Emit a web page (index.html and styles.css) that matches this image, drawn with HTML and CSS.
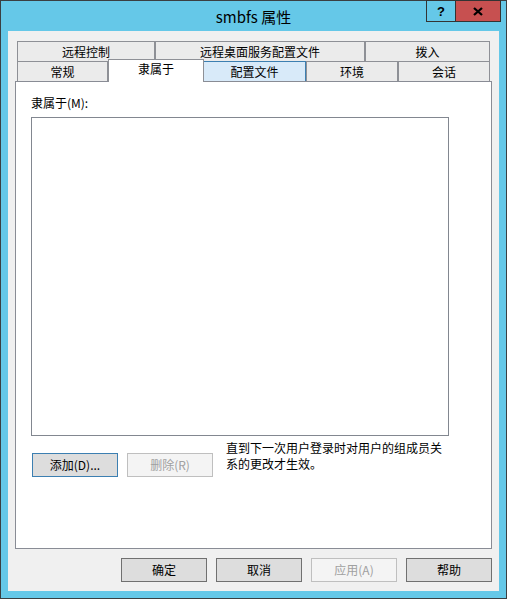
FILE: index.html
```html
<!DOCTYPE html>
<html lang="zh-CN">
<head>
<meta charset="utf-8">
<title>smbfs 属性</title>
<link rel="stylesheet" href="styles.css">
</head>
<body>
<div class="window">
  <div class="titlebar">
    <div class="title">smbfs 属性</div>
    <div class="caption">
      <div class="cap-btn cap-help">?</div>
      <div class="cap-btn cap-close">
        <svg width="10" height="9" viewBox="0 0 10 9"><path d="M1 1 L9 8 M9 1 L1 8" stroke="#000" stroke-width="2.3" fill="none"/></svg>
      </div>
    </div>
  </div>
  <div class="client">
    <div class="tabs">
      <div class="tab-row">
        <div class="tab t-remote">远程控制</div>
        <div class="tab t-rds">远程桌面服务配置文件</div>
        <div class="tab t-dial">拨入</div>
      </div>
      <div class="tab-row">
        <div class="tab t-general">常规</div>
        <div class="tab t-member selected">隶属于</div>
        <div class="tab t-profile hover">配置文件</div>
        <div class="tab t-env">环境</div>
        <div class="tab t-session">会话</div>
      </div>
    </div>
    <div class="panel">
      <div class="label">隶属于(M):</div>
      <div class="listbox"></div>
      <div class="actions">
        <div class="btn focused">添加(D)...</div>
        <div class="btn disabled">删除(R)</div>
        <p class="note">直到下一次用户登录时对用户的组成员关系的更改才生效。</p>
      </div>
    </div>
    <div class="footer">
      <div class="btn dark">确定</div>
      <div class="btn dark">取消</div>
      <div class="btn disabled">应用(A)</div>
      <div class="btn dark">帮助</div>
    </div>
  </div>
</div>
</body>
</html>
```
FILE: styles.css
```css
* { box-sizing: border-box; }
html, body { margin: 0; padding: 0; }
body {
  font-family: "Noto Sans CJK SC", "Liberation Sans", sans-serif;
  font-size: 12px;
  color: #000;
  background: #fff;
}
.window {
  position: relative;
  width: 507px;
  height: 599px;
  border: 1px solid #3a3f42;
  background: #65c8e8;
  padding: 0 7px 7px 7px;
}
.titlebar {
  height: 30px;
  display: flex;
  align-items: center;
  justify-content: center;
}
.title {
  font-size: 15px;
  line-height: 20px;
  padding-top: 1px;
  color: #000;
}
.caption {
  position: absolute;
  top: -1px;
  right: 5px;
  display: flex;
}
.cap-btn {
  height: 22px;
  border: 1px solid #333;
  display: flex;
  align-items: center;
  justify-content: center;
}
.cap-help {
  width: 29px;
  border-right: none;
  background: #65c8e8;
  font-family: "Liberation Sans", sans-serif;
  font-weight: bold;
  font-size: 13px;
  padding-top: 1px;
}
.cap-close {
  width: 46px;
  background: #c75050;
}
.client {
  height: 560px;
  background: #f0f0f0;
  padding: 10px 7px 9px 7px;
}
.tabs {
  padding: 0 2px;
}
.tab-row {
  display: flex;
  height: 20px;
}
.tab {
  height: 20px;
  border: 1px solid #8e9096;
  border-bottom: none;
  background: #ebebeb;
  text-align: center;
  line-height: 18px;
  padding-top: 1px;
  white-space: nowrap;
}
.t-remote { width: 138px; }
.t-rds { width: 210px; }
.t-dial { width: 125px; }
.t-general { width: 91px; }
.t-member { width: 95px; }
.t-profile { width: 103px; }
.t-env { width: 92px; }
.t-session { width: 92px; }
.tab.hover {
  background: #d8eaf9;
  border-color: #3c7fb1;
  border-left-color: #3c7fb1;
}
.tab.selected {
  position: relative;
  z-index: 1;
  width: 96px;
  height: 23px;
  margin-top: -2px;
  margin-right: -1px;
  background: #fff;
  line-height: 18px;
  padding-top: 0;
}
.panel {
  height: 468px;
  border: 1px solid #898c95;
  background: #fff;
  padding: 13px 0 0 15px;
}
.label {
  line-height: 16px;
  height: 16px;
}
.listbox {
  margin-top: 6px;
  width: 418px;
  height: 319px;
  border: 1px solid #828790;
  background: #fff;
}
.actions {
  display: flex;
  align-items: flex-start;
  margin-top: 4px;
  padding-left: 1px;
}
.btn {
  width: 86px;
  height: 24px;
  border: 1px solid #707070;
  background: #dddddd;
  text-align: center;
  line-height: 21px;
  white-space: nowrap;
}
.actions .btn { margin-top: 13px; margin-right: 9px; }
.btn.focused { border-color: #3c7fb1; }
.btn.disabled {
  border-color: #bfbfbf;
  background: #f4f4f4;
  color: #a0a0a0;
}
.note {
  margin: 0 0 0 4px;
  width: 220px;
  line-height: 16px;
}
.footer {
  display: flex;
  justify-content: flex-end;
  gap: 9px;
  margin-top: 9px;
}
```
